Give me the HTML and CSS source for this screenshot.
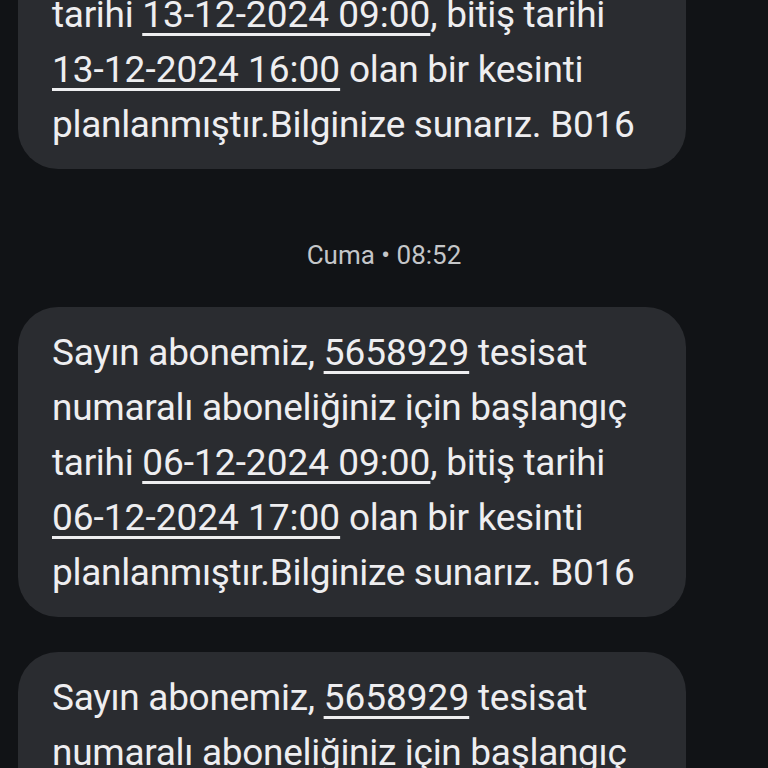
FILE: index.html
```html
<!DOCTYPE html>
<html lang="tr">
<head>
    <meta charset="UTF-8">
    <meta name="viewport" content="width=device-width, initial-scale=1.0">
    <title>Mesajlar</title>
    <link rel="stylesheet" href="styles.css">
</head>
<body>
    <div class="thread">
        <div class="bubble">
            Sayın abonemiz, <u>5658929</u> tesisat numaralı aboneliğiniz için başlangıç tarihi <u>13-12-2024 09:00</u>, bitiş tarihi <u>13-12-2024 16:00</u> olan bir kesinti planlanmıştır.Bilginize sunarız. B016
        </div>

        <div class="stamp">Cuma • 08:52</div>

        <div class="bubble">
            Sayın abonemiz, <u>5658929</u> tesisat numaralı aboneliğiniz için başlangıç tarihi <u>06-12-2024 09:00</u>, bitiş tarihi <u>06-12-2024 17:00</u> olan bir kesinti planlanmıştır.Bilginize sunarız. B016
        </div>

        <div class="bubble">
            Sayın abonemiz, <u>5658929</u> tesisat numaralı aboneliğiniz için başlangıç tarihi <u>29-11-2024 09:00</u>, bitiş tarihi <u>29-11-2024 17:00</u> olan bir kesinti planlanmıştır.Bilginize sunarız. B016
        </div>
    </div>
</body>
</html>
```

FILE: styles.css
```css
:root {
    --page-bg: #111316;
    --bubble-bg: #2a2c30;
    --text-light: #eeeef0;
    --text-muted: #c4c6c9;
}

html, body {
    margin: 0;
    padding: 0;
    background: var(--page-bg);
    height: 768px;
    overflow: hidden;
}

body {
    font-family: Roboto, "Noto Sans", sans-serif;
}

.thread {
    display: flex;
    flex-direction: column;
    padding: 0 18px;
    margin-top: -141px;
}

/* incoming messages leave room on the right */
.bubble {
    background: var(--bubble-bg);
    color: var(--text-light);
    border-radius: 40px;
    padding: 18px 30px 17px 34px;
    margin: 0 64px 35px 0;
    font-size: 37px;
    line-height: 55px;
    letter-spacing: -0.3px;
}

.bubble u {
    white-space: nowrap;
    letter-spacing: 0;
    text-decoration-thickness: 3px;
    text-underline-offset: 6px;
}

.stamp {
    color: var(--text-muted);
    font-size: 26px;
    line-height: 30px;
    text-align: center;
    margin: 36px 0 37px;
}
```
